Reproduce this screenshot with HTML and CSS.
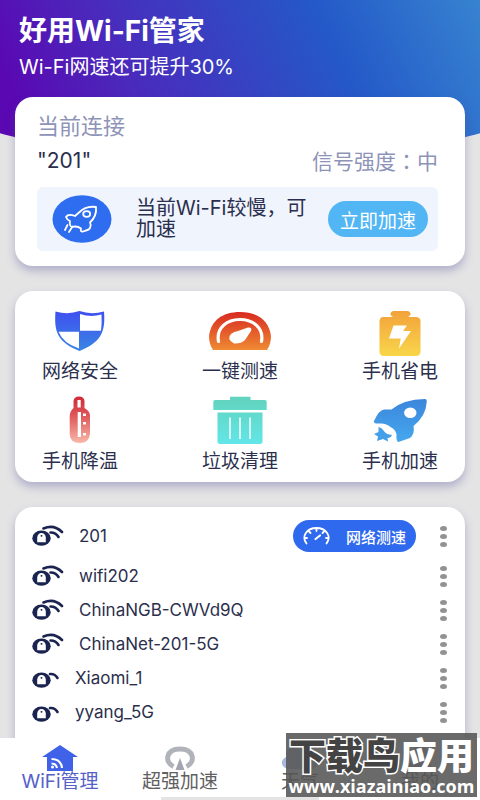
FILE: index.html
```html
<!DOCTYPE html>
<html lang="zh-CN">
<head>
    <meta charset="UTF-8">
    <meta name="viewport" content="width=device-width, initial-scale=1.0">
    <title>好用Wi-Fi管家</title>
    <link rel="stylesheet" href="styles.css">
</head>
<body>

<!-- Shared icons -->
<svg class="defs" width="0" height="0" aria-hidden="true">
    <symbol id="lock" viewBox="0 0 20 22">
        <ellipse cx="9.5" cy="13.2" rx="9.2" ry="7.6" fill="#1b2350"/>
        <path d="M5.200 17.300V12.500Q5.800 8 9.500 8T13.800 12.500V17.300Z" fill="#fff"/>
        <ellipse cx="9.500" cy="10.800" rx="1" ry=".9" fill="#1b2350"/>
    </symbol>
    <symbol id="wifi-full" viewBox="0 0 32 22">
        <use href="#lock" width="20" height="22"/>
        <path d="M11.500 3.500Q22-1 30 7M18.500 7.500Q24 7.500 26.500 12" fill="none" stroke="#1b2350" stroke-width="2.600" stroke-linecap="round"/>
    </symbol>
    <symbol id="wifi-low" viewBox="0 0 28 22">
        <use href="#lock" width="20" height="22"/>
        <path d="M18 7Q23 6.500 25.500 11" fill="none" stroke="#1b2350" stroke-width="2.600" stroke-linecap="round"/>
    </symbol>
</svg>

<main>
    <header class="hero">
        <h1>好用Wi-Fi管家</h1>
        <p>Wi-Fi网速还可提升30%</p>
    </header>

    <section class="card connection">
        <p class="muted">当前连接</p>
        <div class="network">
            <span class="ssid">"201"</span>
            <span class="signal">信号强度<span class="colon" lang="zh-TW">：</span>中</span>
        </div>
        <div class="tip">
            <svg class="tip-icon" viewBox="0 0 60 48">
                <ellipse cx="30" cy="24" rx="29.500" ry="23.700" fill="#2e6cf0"/>
                <g fill="none" stroke="#fff" stroke-width="1.800" stroke-linejoin="round" stroke-linecap="round">
                    <path d="M44 12Q34 10.500 27 17.500L23 21Q16 18.500 14 22Q15 25 18 26Q17 31 20 32Q25 30.500 29 33.500Q28 37 31 36.500Q37 35 38 33Q39.500 30 38 27.500Q45 21 44 12Z"/>
                    <ellipse cx="34.700" cy="19" rx="3.500" ry="2.800"/>
                    <path d="M15.500 30L13 35M20.500 31.500L17 37"/>
                </g>
            </svg>
            <p>当前Wi-Fi较慢，可加速</p>
            <button type="button" class="boost">立即加速</button>
        </div>
    </section>

    <section class="card tools">
        <a href="#">
            <svg viewBox="0 0 64 53">
                <linearGradient id="g1" x2="0" y2="1"><stop stop-color="#3f4ff0"/><stop offset="1" stop-color="#3a86e4"/></linearGradient>
                <path d="M7.500 5.500Q20 9 31.500 5Q43 9 56 5.500C57.500 25 54 36 31.500 45C9 36 6 25 7.500 5.500Z" fill="url(#g1)"/>
                <path d="M32 8Q43 11.500 53.500 8.500Q54 18 53 24.700H32ZM31 25.700H10.500Q15 37 31 42.500Z" fill="#fff"/>
            </svg>
            网络安全
        </a>
        <a href="#">
            <svg viewBox="0 0 64 53">
                <linearGradient id="g2" x2="0" y2="1"><stop stop-color="#d82a20"/><stop offset="1" stop-color="#ef8a33"/></linearGradient>
                <path d="M5 44Q1 38 1 30C3 14 15 6 32 6S61 14 63 30Q63 38 59 44Z" fill="url(#g2)"/>
                <path d="M10.500 35.500C8 22 19 13.500 32 13.500S56 22 53.500 35.500" fill="none" stroke="#fff" stroke-width="3.200" stroke-linecap="round"/>
                <path d="M40 21.500Q44.500 21 43 25L37 34Q33 38 26 37.500Q18 33 23 28Q26 25.500 30 25Z" fill="#fff"/>
            </svg>
            一键测速
        </a>
        <a href="#">
            <svg viewBox="0 0 64 53">
                <linearGradient id="g3" x2="0" y2="1"><stop stop-color="#f2a23a"/><stop offset="1" stop-color="#f9d64a"/></linearGradient>
                <path d="M25 5H40Q43 6 42.500 9L40 11H49Q52.500 12 52.500 15V46Q52 50 48 50H15Q11.500 49 11.500 46V15Q12 11 15 11H25L22.500 9Q22 6 25 5Z" fill="url(#g3)"/>
                <path d="M25.500 19.500H39L35 25H43L31 42.500L32.700 32.500H21Z" fill="#fff"/>
            </svg>
            手机省电
        </a>
        <a href="#">
            <svg viewBox="0 0 64 53">
                <linearGradient id="g4" x2="0" y2="1"><stop stop-color="#cf2a38"/><stop offset=".4" stop-color="#df5558"/><stop offset="1" stop-color="#f8b7a8"/></linearGradient>
                <path d="M25.500 5Q26 .5 31 .5Q36 .5 36.500 5V12Q42 15 42 20V38Q41 47 32 47Q22 47 21.700 38V20Q22 15 25.500 12Z" fill="url(#g4)"/>
                <path d="M29.500 4H32.700V11.500H29.500ZM29.700 16H33V41H29.700ZM35 17.500H38V20H35ZM35 26H38V28.500H35ZM35 37H38V39.500H35Z" fill="#fff"/>
            </svg>
            手机降温
        </a>
        <a href="#">
            <svg viewBox="0 0 64 53">
                <linearGradient id="g5" x2="0" y2="1"><stop stop-color="#62d3bd"/><stop offset="1" stop-color="#62e6e8"/></linearGradient>
                <path d="M22 .7H42.500V4H57Q58.700 4 58.700 6V14H5.300V6Q5.300 4 7 4H22ZM9.500 16.500H54.500V46Q54.500 48 52 48H12Q9.500 48 9.500 46Z" fill="url(#g5)"/>
                <path d="M22 21.500V43M32 21.500V43M42 21.500V43" stroke="#d8fbf8" stroke-width="2"/>
            </svg>
            垃圾清理
        </a>
        <a href="#">
            <svg viewBox="0 0 64 53">
                <linearGradient id="g6" x2="0" y2="1"><stop stop-color="#3c86dc"/><stop offset="1" stop-color="#45a8ee"/></linearGradient>
                <path d="M57 3Q59 3 58.700 6Q58 20 45.500 30Q47 38 42 42L30.500 46Q28 46 28.500 38Q27 33 22.500 31Q18 27 12 27.500Q5 28 6 25Q11 14 16 13.500L23.500 13.500Q35 3.500 57 3Z" fill="url(#g6)"/>
                <path d="M10.500 31Q14 31.500 15.500 34.500Q18 38.500 24 39Q23 42 19.500 42L20 45.500L15 43L9 45L10 40.500L6 38L10.500 36Z" fill="#45a0ea"/>
                <ellipse cx="42.300" cy="16.700" rx="6.200" ry="5.300" fill="#fff"/>
            </svg>
            手机加速
        </a>
    </section>

    <section class="card">
        <ul class="wifi-list">
            <li class="current">
                <svg class="full"><use href="#wifi-full"/></svg>
                <span>201</span>
                <button type="button" class="speed">
                    <svg viewBox="0 0 27 18" fill="none" stroke="#fff" stroke-width="1.800" stroke-linecap="round">
                        <path d="M3.500 16.500C-2 9 4 1 13.500 1S29 9 23.500 16.500M13.500 1V4M6 4.500L7.500 6M21 4.500L19.500 6M1.500 11H4M25.500 11H23"/>
                        <path d="M12.500 12L17 8.500" stroke-width="2.200"/>
                    </svg>
                    网络测速
                </button>
                <button type="button" class="more" aria-label="更多"><i></i><i></i><i></i></button>
            </li>
            <li>
                <svg class="full"><use href="#wifi-full"/></svg>
                <span>wifi202</span>
                <button type="button" class="more" aria-label="更多"><i></i><i></i><i></i></button>
            </li>
            <li>
                <svg class="full"><use href="#wifi-full"/></svg>
                <span>ChinaNGB-CWVd9Q</span>
                <button type="button" class="more" aria-label="更多"><i></i><i></i><i></i></button>
            </li>
            <li>
                <svg class="full"><use href="#wifi-full"/></svg>
                <span>ChinaNet-201-5G</span>
                <button type="button" class="more" aria-label="更多"><i></i><i></i><i></i></button>
            </li>
            <li>
                <svg class="low"><use href="#wifi-low"/></svg>
                <span>Xiaomi_1</span>
                <button type="button" class="more" aria-label="更多"><i></i><i></i><i></i></button>
            </li>
            <li>
                <svg class="low"><use href="#wifi-low"/></svg>
                <span>yyang_5G</span>
                <button type="button" class="more" aria-label="更多"><i></i><i></i><i></i></button>
            </li>
        </ul>
    </section>
</main>

<nav class="tabbar">
    <a href="#" class="active">
        <svg viewBox="0 0 36 26">
            <path d="M18 0L36 12H31V26H5V12H0Z" fill="#4062e8"/>
            <path d="M9.500 14Q19 14 20 23M9.500 18.500Q14 18.500 15 23" fill="none" stroke="#fff" stroke-width="2.200"/>
            <circle cx="10.500" cy="22" r="1.500" fill="#fff"/>
        </svg>
        WiFi管理
    </a>
    <a href="#">
        <svg viewBox="0 0 36 26">
            <path d="M11.500 21.500C2 17 4 4 18 4S34 17 24.500 21.500" fill="none" stroke="#b1b3ba" stroke-width="5"/>
            <path d="M18 13L22.500 25H13.500Z" fill="#a3a5b0"/>
        </svg>
        超强加速
    </a>
    <a href="#">
        <svg viewBox="0 0 36 26">
            <path d="M6 24C-3 22-1 13 5 12C2 3 12-1 17 4C27-1 34 6 31 13C38 16 36 24 30 24Z" fill="#a9b8dc"/>
        </svg>
        天气
    </a>
    <a href="#">
        <svg viewBox="0 0 36 26">
            <circle cx="18" cy="7" r="7" fill="#a9b8dc"/>
            <path d="M5 26Q6 15 18 15T31 26Z" fill="#a9b8dc"/>
        </svg>
        我的
    </a>
</nav>

<div class="watermark">
    <strong><span>下载鸟</span>应用</strong>
    <em>www.xiazainiao.com</em>
</div>

</body>
</html>
```
FILE: styles.css
```css
* {
    box-sizing: border-box;
}

body {
    position: relative;
    display: flex;
    flex-direction: column;
    height: 100vh;
    margin: 0;
    overflow: hidden;
    background: #e4e4e5;
    color: #2b2f4d;
    font-family: Inter, "Noto Sans CJK SC", sans-serif;
}

h1, p, ul {
    margin: 0;
    padding: 0;
}

button {
    border: none;
    font-family: inherit;
    cursor: pointer;
}

a {
    color: inherit;
    text-decoration: none;
}

.defs {
    position: absolute;
}

main {
    flex: 1;
    min-height: 0;
    overflow: hidden;
}

/* Header */
.hero {
    height: 162px;
    padding: 15px 19px;
    background: linear-gradient(65deg, #5a08b2 8%, #4a2abc 30%, #2459c8 70%, #3783d0);
    clip-path: ellipse(88% 100% at 50% 0);
    color: white;
}

.hero h1 {
    font-size: 28px;
    line-height: 32px;
}

.hero p {
    margin-top: 8px;
    font-size: 20px;
    line-height: 24px;
}

.card {
    margin: 0 15px 25px;
    border-radius: 18px;
    background: white;
    box-shadow: 0 5px 8px rgba(84, 80, 150, 0.35);
}

/* Current connection */
.connection {
    position: relative;
    margin-top: -65px;
    padding: 16px 27px 15px 22px;
}

.muted {
    color: #8e93b8;
    font-size: 22px;
    line-height: 26px;
}

.network {
    display: flex;
    justify-content: space-between;
    margin: 8px 0 12px;
    font-size: 21px;
    line-height: 27px;
}

.signal {
    color: #8e93b8;
}

.colon {
    font-family: "Noto Sans CJK TC", sans-serif;
}

.tip {
    display: flex;
    align-items: center;
    height: 64px;
    padding: 0 10px 0 15px;
    border-radius: 6px;
    background: #eff4fd;
}

.tip-icon {
    flex: none;
    width: 60px;
    height: 48px;
}

.tip p {
    flex: 1;
    margin: 0 14px 0 24px;
    font-size: 20px;
    line-height: 21px;
}

.boost {
    flex: none;
    width: 100px;
    height: 36px;
    padding: 0;
    border-radius: 18px;
    background: #52b6f5;
    color: white;
    font-size: 19px;
}

/* Tools */
.tools {
    display: grid;
    grid-template-columns: repeat(3, auto);
    justify-content: space-between;
    row-gap: 11px;
    padding: 15px 27px 7px;
}

.tools a {
    display: flex;
    flex-direction: column;
    align-items: center;
    font-size: 19px;
    line-height: 26px;
}

.tools svg {
    width: 64px;
    height: 53px;
}

/* Wifi list */
.wifi-list {
    padding: 6px 14px 30px 17px;
    list-style: none;
}

.wifi-list li {
    display: flex;
    align-items: center;
    height: 34px;
    font-size: 17px;
}

.wifi-list li.current {
    height: 46px;
}

.wifi-list li > span {
    flex: 1;
    margin-left: 15px;
}

.full {
    width: 32px;
    height: 22px;
}

.low {
    width: 28px;
    height: 22px;
}

.speed {
    display: flex;
    align-items: center;
    justify-content: space-between;
    width: 123px;
    height: 32px;
    margin-right: 20px;
    padding: 0 10px;
    border-radius: 16px;
    background: #2e69ee;
    color: white;
    font-size: 15px;
    font-weight: 500;
}

.speed svg {
    width: 27px;
    height: 18px;
}

.more {
    display: flex;
    flex-direction: column;
    gap: 3px;
    padding: 4px;
    background: none;
}

.more i {
    width: 7px;
    height: 5px;
    border-radius: 50%;
    background: #929292;
}

/* Bottom tabs */
.tabbar {
    display: flex;
    height: 62px;
    padding-top: 7px;
    background: linear-gradient(#e4e4e5, #e4e4e5) center bottom / 33% 3px no-repeat white;
}

.tabbar a {
    display: flex;
    flex: 1;
    flex-direction: column;
    align-items: center;
    color: #606060;
    font-size: 19px;
    line-height: 22px;
}

.tabbar a.active {
    color: #5561c8;
}

.tabbar svg {
    width: 36px;
    height: 26px;
}

.watermark {
    position: absolute;
    right: 3px;
    bottom: 3px;
    width: 191px;
    height: 64px;
    padding-top: 3px;
    background: rgba(85, 85, 85, 0.88);
    color: white;
    text-align: center;
}

.watermark strong {
    display: block;
    font-size: 37px;
    font-weight: 900;
    line-height: 42px;
    white-space: nowrap;
}

.watermark strong span {
    color: #444;
    -webkit-text-stroke: 3px white;
    paint-order: stroke fill;
}

.watermark em {
    display: block;
    font-family: "Open Sans", sans-serif;
    font-size: 18px;
    font-weight: bold;
    font-style: normal;
    line-height: 16px;
}
```
